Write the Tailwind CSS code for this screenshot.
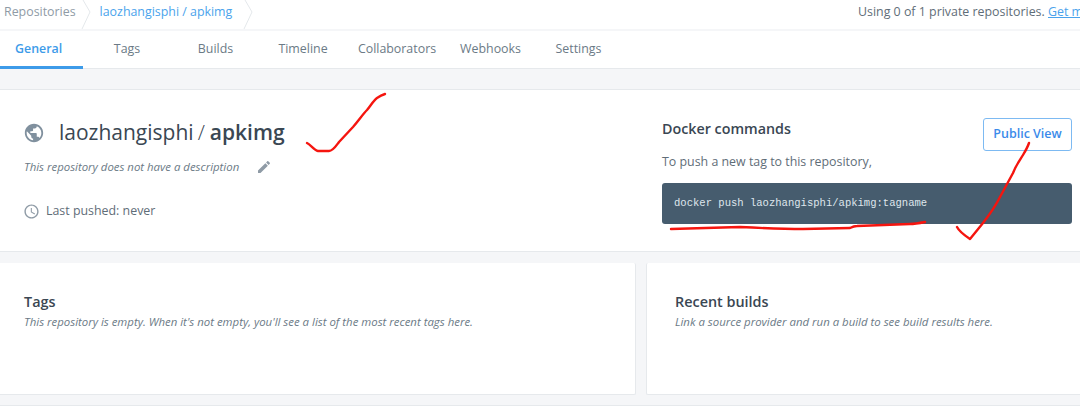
<!DOCTYPE html>
<html lang="en">
<head>
    <meta charset="UTF-8">
    <title>laozhangisphi / apkimg</title>
    <script src="https://cdn.jsdelivr.net/npm/@tailwindcss/browser@4"></script>
</head>
<body class="bg-[#f5f6f8] font-['Open_Sans',sans-serif]">
<div class="relative w-[1080px] h-[406px] overflow-hidden">
    <!-- breadcrumb -->
    <div class="h-[29px] bg-white flex items-center pb-[4px] text-[12.4px] whitespace-nowrap">
        <div class="w-[858px] shrink-0 flex items-center h-full">
            <span class="ml-[4px] text-[#8f9ba6]">Repositories</span>
            <a class="ml-[24px] text-[#4aa3ec]">laozhangisphi / apkimg</a>
            <svg class="absolute left-[80px] top-0" width="12" height="29" fill="none" stroke="#e4e8eb"><path d="M3 0 10 12 2 29"/></svg>
            <svg class="absolute left-[242px] top-0" width="12" height="29" fill="none" stroke="#e4e8eb"><path d="M3 0 10 12 2 29"/></svg>
        </div>
        <span class="shrink-0 text-[#5f6d78]">Using 0 of 1 private repositories. <a class="text-[#4aa3ec] underline">Get more</a></span>
    </div>
    <!-- tabs -->
    <div class="mt-[2px] h-[38px] bg-white border-b border-[#e6e9ec] flex text-[12.4px] text-[#6b7a86]">
        <div class="w-[83px] pl-[15px] pt-[9px] font-semibold text-[#3d9be9] border-b-[3px] border-[#3d9be9] h-[38px]">General</div>
        <div class="w-[88px] pt-[9px] text-center">Tags</div>
        <div class="w-[89px] pt-[9px] text-center">Builds</div>
        <div class="w-[86px] pt-[9px] text-center">Timeline</div>
        <div class="w-[102px] pt-[9px] text-center">Collaborators</div>
        <div class="w-[85px] pt-[9px] text-center">Webhooks</div>
        <div class="w-[91px] pt-[9px] text-center">Settings</div>
    </div>
    <!-- repo header card -->
    <div class="mt-[20px] h-[163px] bg-white border-y border-[#e6e9ec] flex">
        <div class="w-[662px] shrink-0 pl-[23px]">
            <div class="flex items-center mt-[28px] h-[30px]">
                <svg class="w-[22px] h-[22px] text-[#80909e]" viewBox="0 0 24 24" fill="currentColor"><path d="M12 2C6.48 2 2 6.48 2 12s4.48 10 10 10 10-4.48 10-10S17.52 2 12 2zm-1 17.93c-3.95-.49-7-3.85-7-7.93 0-.62.08-1.21.21-1.79L9 15v1c0 1.1.9 2 2 2v1.93zm6.9-2.54c-.26-.81-1-1.39-1.9-1.39h-1v-3c0-.55-.45-1-1-1H8v-2h2c.55 0 1-.45 1-1V7h2c1.1 0 2-.9 2-2v-.41c2.93 1.19 5 4.06 5 7.41 0 2.08-.8 3.97-2.1 5.39z"/></svg>
                <h1 class="ml-[14px] text-[21px] text-[#3a4753] whitespace-nowrap">laozhangisphi<span class="ml-[4px] mr-[5px] font-light">/</span><span class="font-semibold">apkimg</span></h1>
            </div>
            <div class="flex items-center mt-[9px] h-[20px]">
                <span class="ml-[1px] text-[11.4px] italic text-[#6b7a86]">This repository does not have a description</span>
                <svg class="ml-[17px] w-[16px] h-[16px] text-[#8f9ba6]" viewBox="0 0 24 24" fill="currentColor"><path d="M3 17.25V21h3.75L17.81 9.94l-3.75-3.75L3 17.25zM20.71 7.04c.39-.39.39-1.02 0-1.41l-2.34-2.34c-.39-.39-1.02-.39-1.41 0l-1.83 1.83 3.75 3.75 1.83-1.83z"/></svg>
            </div>
            <div class="flex items-center mt-[24px] h-[20px]">
                <svg class="w-[17px] h-[17px] text-[#8f9ba6]" viewBox="0 0 24 24" fill="currentColor"><path d="M11.99 2C6.47 2 2 6.48 2 12s4.47 10 9.99 10C17.52 22 22 17.52 22 12S17.52 2 11.99 2zM12 20c-4.42 0-8-3.58-8-8s3.58-8 8-8 8 3.58 8 8-3.58 8-8 8zm.5-13H11v6l5.25 3.15.75-1.23-4.5-2.67z"/></svg>
                <span class="ml-[6px] text-[12.4px] text-[#5f6d78]">Last pushed: never</span>
            </div>
        </div>
        <div class="w-[410px] shrink-0">
            <div class="flex justify-between mt-[28px] h-[32px]">
                <h2 class="text-[14.3px] font-semibold text-[#3a4753]">Docker commands</h2>
                <button class="w-[89px] h-[33px] bg-white border border-[#7dbaf2] rounded-[3px] text-[12.5px] font-semibold text-[#3b8bea]">Public View</button>
            </div>
            <p class="mt-[2px] text-[12.4px] leading-[20px] text-[#5f6d78]">To push a new tag to this repository,</p>
            <div class="mt-[11px] h-[41px] bg-[#465c6e] rounded-[3px] pl-[12px] flex items-center font-['Liberation_Mono',monospace] text-[10.55px] text-[#dfe6ec]">docker push laozhangisphi/apkimg:tagname</div>
        </div>
    </div>
    <!-- bottom cards -->
    <div class="mt-[11px] flex gap-[10px]">
        <div class="w-[636px] h-[132px] shrink-0 bg-white border-r border-b border-[#e6e9ec] rounded-r-[2px] pl-[24px] pt-[29px]">
            <h2 class="text-[14.4px] leading-[20px] font-semibold text-[#3a4753]">Tags</h2>
            <p class="mt-[2px] text-[11.42px] leading-[16px] italic text-[#6b7a86]">This repository is empty. When it's not empty, you'll see a list of the most recent tags here.</p>
        </div>
        <div class="w-[440px] h-[132px] shrink-0 bg-white border-l border-b border-[#e6e9ec] rounded-l-[2px] pl-[28px] pt-[29px]">
            <h2 class="text-[14.4px] leading-[20px] font-semibold text-[#3a4753]">Recent builds</h2>
            <p class="mt-[2px] text-[11.42px] leading-[16px] italic text-[#6b7a86]">Link a source provider and run a build to see build results here.</p>
        </div>
    </div>
    <div class="mt-[10px] h-[4px] bg-white border-t border-[#e6e9ec]"></div>
    <!-- red pen marks on top of the screenshot -->
    <svg class="absolute left-0 top-0 pointer-events-none" width="1080" height="406" fill="none" stroke="#f5150f" stroke-width="2.4" stroke-linecap="round" stroke-linejoin="round">
        <path d="M307 143C311 145 314 150 318 151H329C333 151 336 146 339 142L353 127C359 120 363 114 367 110C371 105 374 100 377 98C380 96 382 95 385 94"/>
        <path d="M671 229 740 227C760 228 785 229 803 229L850 228C852 227 855 226 857 226L910 224C915 224 920 223 925 222"/>
        <path d="M957 227C959 231 964 235 970 239L983 223C990 214 996 205 1000 197L1013 173C1016 165 1020 160 1023 155C1026 150 1028 146 1029 143"/>
    </svg>
</div>
</body>
</html>
